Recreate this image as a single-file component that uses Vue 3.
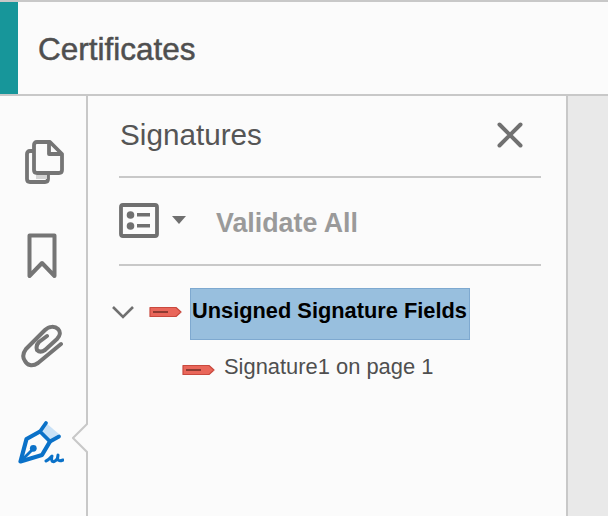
<script setup>
</script>

<template>
  <div class="page">
    <header class="topbar">
      <div class="accent"></div>
      <h1 class="title">Certificates</h1>
    </header>
    <div class="body">
      <nav class="rail">
        <svg class="ic ic-pages" width="40" height="46" viewBox="0 0 40 46" fill="none">
          <path d="M9 12H5Q2 12 2 15V40Q2 43 5 43H20Q23 43 23 40V36" stroke="#757575" stroke-width="3.800" stroke-linejoin="round"/>
          <rect x="11" y="36" width="11" height="4" fill="#d4d4d4"/>
          <path d="M12 3H25L37 15V31Q37 34 34 34H12Q9 34 9 31V6Q9 3 12 3Z" stroke="#757575" stroke-width="3.800" stroke-linejoin="round"/>
          <path d="M24 3V15H37" stroke="#757575" stroke-width="3.800" stroke-linejoin="round"/>
        </svg>
        <svg class="ic ic-mark" width="30" height="46" viewBox="0 0 30 46" fill="none">
          <path d="M2.500 2.500H27.500V43L15 30L2.500 43Z" stroke="#757575" stroke-width="4" stroke-linejoin="round"/>
        </svg>
        <svg class="ic ic-clip" width="44" height="44" viewBox="0 0 44 44" fill="none">
          <path d="M40 20L17 39C11 43 6 41 4 37C1 33 2 29 5 25L24 6C28 2 34 2 37 5C40 8 39 12 36 15L24 26C21 28 18 28 16 26C15 23 16 20 18 18L26 12" stroke="#757575" stroke-width="4" stroke-linecap="round" stroke-linejoin="round"/>
        </svg>
        <svg class="ic ic-sign" width="46" height="46" viewBox="0 0 46 46" fill="none">
          <path d="M28 3L41 14L32 20L23 10Z" fill="#c9e1f6"/>
          <path d="M28 3L22 11.500L32 21.500L41 16.500" stroke="#0a71c8" stroke-width="3.800" stroke-linecap="round" stroke-linejoin="round"/>
          <path d="M22 11.500L8.500 19L2.500 41.500L24 35L32 21.500" stroke="#0a71c8" stroke-width="4.200" stroke-linejoin="round"/>
          <path d="M3 41L15 29" stroke="#0a71c8" stroke-width="2.800"/>
          <circle cx="15.300" cy="28.300" r="3.400" fill="#0a71c8"/>
          <path d="M28 41C31 40 33 37 34 36C33 40 34 43 37 41C39 40 40 38 40 35C39 40 40 42 45 40" stroke="#0a71c8" stroke-width="3" stroke-linecap="round" stroke-linejoin="round"/>
        </svg>
        <svg class="notch" width="16" height="32" viewBox="0 0 16 32">
          <path d="M16 0L1 15L16 30" fill="#fbfbfb" stroke="#c8c8c8" stroke-width="2"/>
        </svg>
      </nav>
      <section class="panel">
        <div class="panel-head">
          <h2 class="panel-title">Signatures</h2>
          <svg class="close" width="26" height="26" viewBox="0 0 26 26" fill="none">
            <path d="M2.500 2.500L23.500 23.500M23.500 2.500L2.500 23.500" stroke="#707070" stroke-width="4" stroke-linecap="round"/>
          </svg>
        </div>
        <div class="tools">
          <svg width="40" height="35" viewBox="0 0 40 35" fill="none">
            <rect x="2" y="2" width="36" height="31" rx="2" stroke="#6f6f6f" stroke-width="3.800"/>
            <circle cx="11.500" cy="12" r="3.800" fill="#6f6f6f"/>
            <circle cx="11.500" cy="23" r="3.800" fill="#6f6f6f"/>
            <rect x="18" y="10" width="13" height="3.500" fill="#6f6f6f"/>
            <rect x="18" y="21" width="13" height="3.500" fill="#6f6f6f"/>
          </svg>
          <svg class="caret" width="14" height="8" viewBox="0 0 14 8"><path d="M0 0H14L7 8Z" fill="#6f6f6f"/></svg>
          <span class="validate">Validate All</span>
        </div>
        <div class="tree">
          <div class="row">
            <svg class="chev" width="24" height="14" viewBox="0 0 24 14" fill="none">
              <path d="M2 2L12 12L22 2" stroke="#707070" stroke-width="2.600"/>
            </svg>
            <svg class="pen" width="33" height="12" viewBox="0 0 33 12">
              <path d="M1 1.500H27L32 6L27 10.500H1Z" fill="#e9665a" stroke="#c9493e" stroke-width="1.200" stroke-linejoin="round"/>
              <rect x="4" y="5" width="15" height="2" fill="#8e3b32"/>
            </svg>
            <span class="selected">Unsigned Signature Fields</span>
          </div>
          <div class="row child">
            <svg class="pen" width="33" height="12" viewBox="0 0 33 12">
              <path d="M1 1.500H27L32 6L27 10.500H1Z" fill="#e9665a" stroke="#c9493e" stroke-width="1.200" stroke-linejoin="round"/>
              <rect x="4" y="5" width="15" height="2" fill="#8e3b32"/>
            </svg>
            <span class="child-label">Signature1 on page 1</span>
          </div>
        </div>
      </section>
      <div class="gutter"></div>
    </div>
  </div>
</template>

<style scoped>
.page {
  width: 608px;
  height: 516px;
  display: flex;
  flex-direction: column;
  overflow: hidden;
  background: #fbfbfb;
  font-family: "Liberation Sans", Arial, sans-serif;
}
.topbar {
  height: 96px;
  box-sizing: border-box;
  flex: none;
  display: flex;
  align-items: stretch;
  border-top: 2px solid #c8c8c8;
  border-bottom: 2px solid #c8c8c8;
}
.accent { width: 18px; background: #17969a; }
.title {
  margin: 2px 0 0 20px;
  align-self: center;
  font-size: 31.500px;
  font-weight: 400;
  color: #4f4f4f;
  -webkit-text-stroke: 0.5px #4f4f4f;
}
.body { flex: 1; display: flex; min-height: 0; }
.rail {
  width: 86px;
  flex: none;
  position: relative;
  display: flex;
  flex-direction: column;
}
.ic { display: block; flex: none; }
.ic-pages { margin: 43px 0 0 25px; }
.ic-mark { margin: 48px 0 0 27px; }
.ic-clip { margin: 45px 0 0 21px; }
.ic-sign { margin: 52px 0 0 18px; }
.notch { position: absolute; left: 72px; top: 327px; }
.panel {
  width: 482px;
  flex: none;
  box-sizing: border-box;
  border-left: 2px solid #c8c8c8;
  border-right: 2px solid #c8c8c8;
  padding: 0 25px 0 31px;
}
.panel-head {
  height: 82px;
  box-sizing: border-box;
  display: flex;
  align-items: center;
  justify-content: space-between;
  padding: 0 18px 2px 1px;
  border-bottom: 2px solid #c8c8c8;
}
.panel-title { margin: 0; font-size: 29.700px; font-weight: 400; color: #555; }
.tools {
  height: 88px;
  box-sizing: border-box;
  display: flex;
  align-items: center;
  border-bottom: 2px solid #c8c8c8;
  padding-bottom: 2px;
}
.caret { margin-left: 13px; }
.validate {
  margin: 6px 0 0 30px;
  font-size: 26.800px;
  font-weight: 700;
  color: #9a9a9a;
}
.tree { padding-top: 22px; }
.row { display: flex; align-items: center; }
.chev { margin: 0 0 4px -8px; }
.row .pen { margin: 0 0 4px 14px; }
.selected {
  box-sizing: border-box;
  width: 280px;
  height: 52px;
  display: flex;
  align-items: center;
  margin-left: 8px;
  padding: 0 1px 6px;
  background: #98bfde;
  border: 1px solid #7ea9d0;
  font-size: 21.800px;
  font-weight: 700;
  color: #000;
  white-space: nowrap;
}
.child { margin-top: 14px; padding-left: 49px; }
.child .pen { margin-bottom: 0; margin-top: 6px; }
.child-label { margin-left: 9px; font-size: 21.900px; color: #4f4f4f; white-space: nowrap; }
.gutter { flex: 1; background: #e9e9e9; }
</style>
